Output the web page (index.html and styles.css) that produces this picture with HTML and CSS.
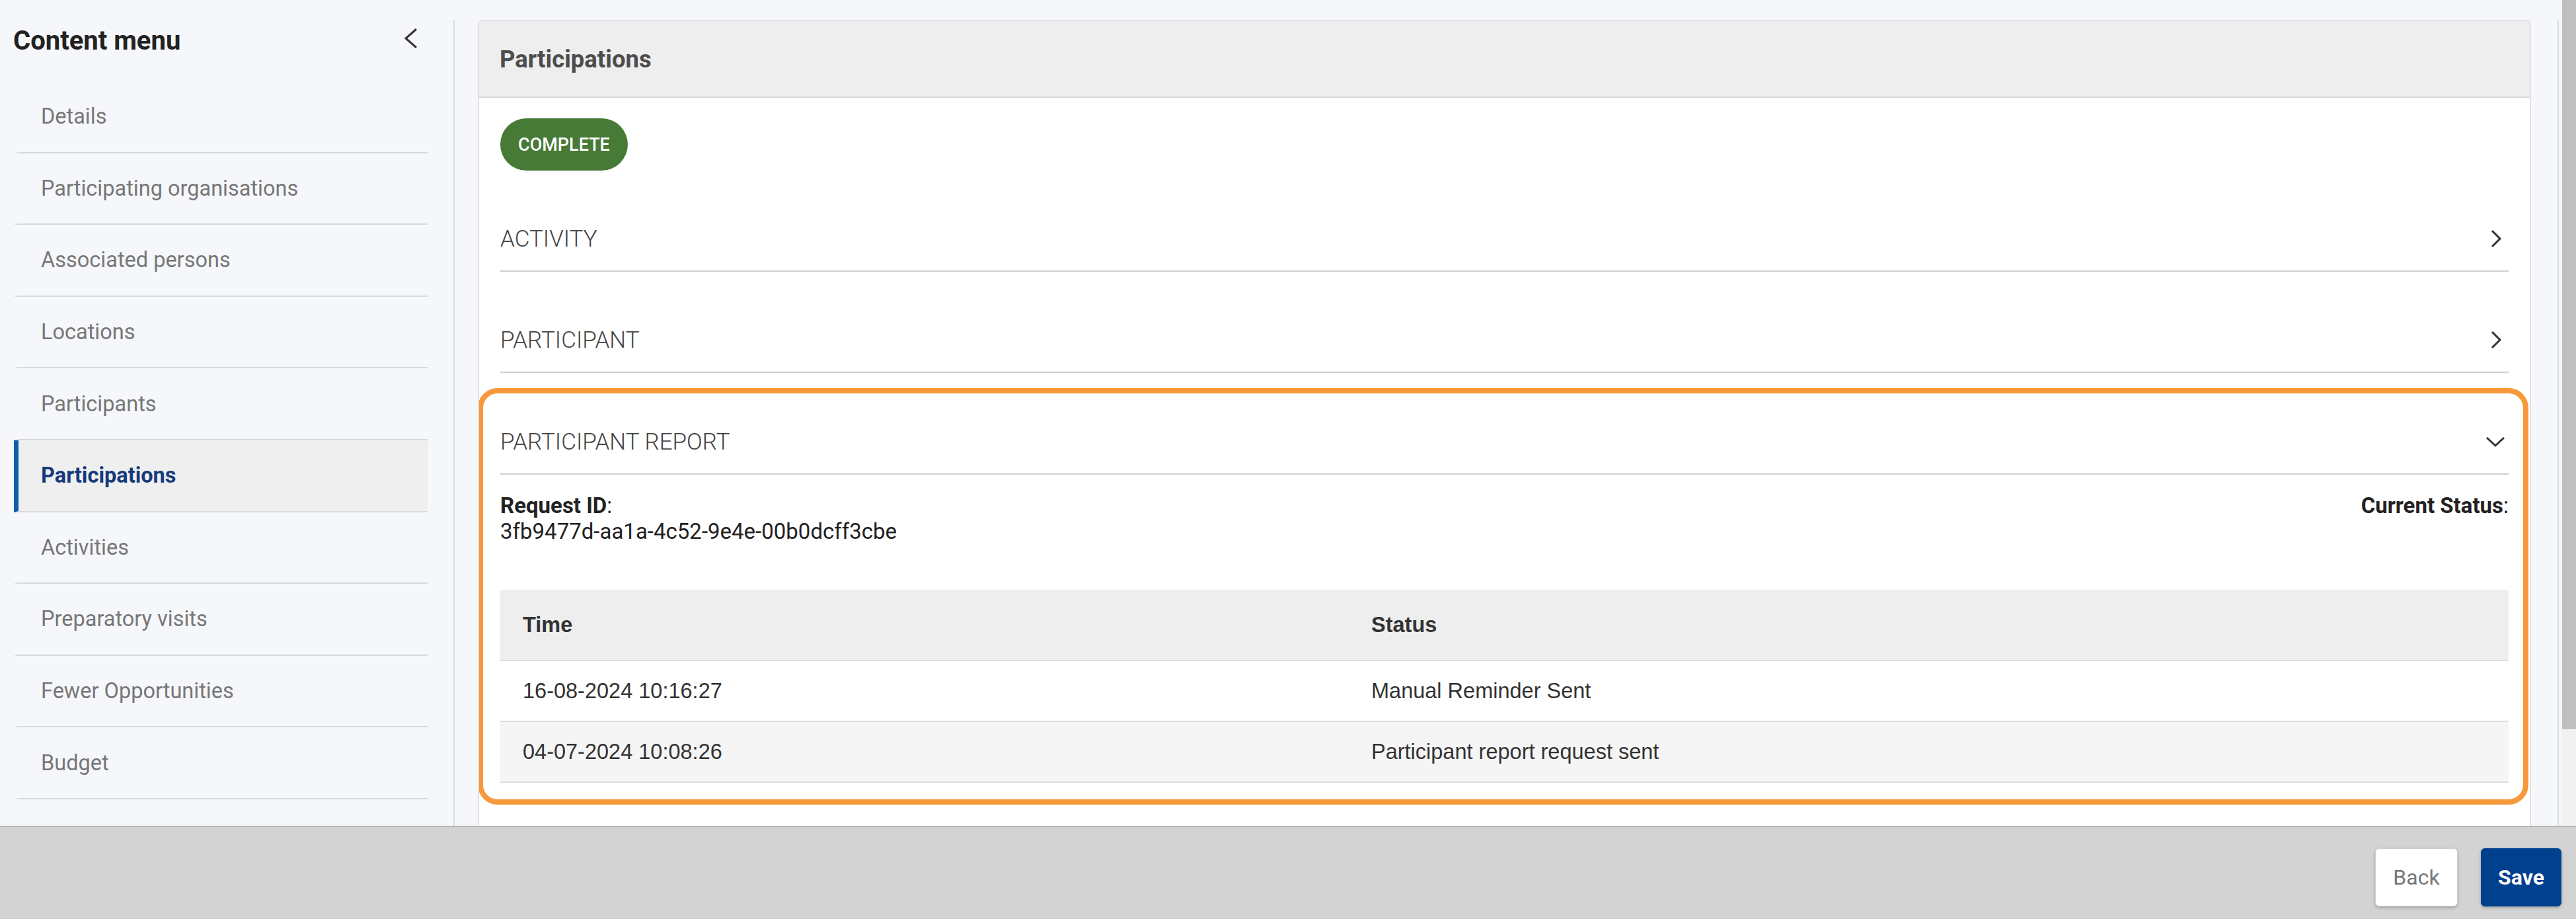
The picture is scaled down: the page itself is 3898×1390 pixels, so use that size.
FILE: index.html
```html
<!DOCTYPE html>
<html lang="en">
<head>
  <meta charset="UTF-8">
  <meta name="viewport" content="width=device-width, initial-scale=1.0">
  <title>Participations</title>
  <link rel="stylesheet" href="styles.css">
</head>
<body>
  <div class="app">
    <div class="workspace">
      <!-- left content menu -->
      <aside class="sidebar">
        <div class="sidebar-head">
          <h2>Content menu</h2>
          <button class="collapse" aria-label="Collapse menu">
            <svg width="24" height="32" viewBox="0 0 24 32"><polyline points="20,2 4,16 20,30" /></svg>
          </button>
        </div>
        <nav class="menu">
          <a href="#">Details</a>
          <a href="#">Participating organisations</a>
          <a href="#">Associated persons</a>
          <a href="#">Locations</a>
          <a href="#">Participants</a>
          <a href="#" class="active">Participations</a>
          <a href="#">Activities</a>
          <a href="#">Preparatory visits</a>
          <a href="#">Fewer Opportunities</a>
          <a href="#">Budget</a>
        </nav>
      </aside>

      <main class="main">
        <section class="card">
          <header class="card-head">Participations</header>
          <div class="card-body">
            <div><span class="badge">Complete</span></div>

            <div class="acc">
              <div class="acc-head">
                <span>ACTIVITY</span>
                <svg class="chev" width="20" height="30" viewBox="0 0 20 30"><polyline points="4,3 16,15 4,27" /></svg>
              </div>
            </div>

            <div class="acc">
              <div class="acc-head">
                <span>PARTICIPANT</span>
                <svg class="chev" width="20" height="30" viewBox="0 0 20 30"><polyline points="4,3 16,15 4,27" /></svg>
              </div>
            </div>

            <!-- opened section, highlighted -->
            <div class="acc open highlight">
              <div class="acc-head">
                <span>PARTICIPANT REPORT</span>
                <svg class="chev-down" width="30" height="16" viewBox="0 0 30 16"><polyline points="2,2 15,14 28,2" /></svg>
              </div>
              <div class="report-info">
                <div>
                  <b>Request ID</b>:<br>
                  3fb9477d-aa1a-4c52-9e4e-00b0dcff3cbe
                </div>
                <div><b>Current Status</b>:</div>
              </div>
              <table class="history">
                <thead>
                  <tr><th class="col-time">Time</th><th>Status</th></tr>
                </thead>
                <tbody>
                  <tr><td>16-08-2024 10:16:27</td><td>Manual Reminder Sent</td></tr>
                  <tr><td>04-07-2024 10:08:26</td><td>Participant report request sent</td></tr>
                </tbody>
              </table>
            </div>
          </div>
        </section>
        <div class="side-rule"></div>
      </main>

      <div class="scrollbar"><div class="thumb"></div></div>
    </div>

    <footer class="actions">
      <button class="btn">Back</button>
      <button class="btn primary">Save</button>
    </footer>
  </div>
</body>
</html>
```

FILE: styles.css
```css
* { box-sizing: border-box; margin: 0; padding: 0; }

body {
  font-family: Roboto, 'Liberation Sans', sans-serif;
  background: #f5f7fa;
  color: #333;
  height: 100vh;
  overflow: hidden;
}

.app {
  display: flex;
  flex-direction: column;
  height: 100vh;
}

.workspace {
  flex: 1;
  display: flex;
  min-height: 0;
  overflow: hidden;
}

/* sidebar */
.sidebar {
  width: 688px;
  flex-shrink: 0;
  background-color: #f5f7fa;
  background-image: linear-gradient(#dcdde0, #dcdde0);
  background-size: 2px calc(100% - 30px);
  background-position: right bottom;
  background-repeat: no-repeat;
}

.sidebar-head {
  display: flex;
  justify-content: space-between;
  align-items: center;
  height: 48px;
  margin: 38px 0 37px;
  padding: 0 54px 0 20px;
}

.sidebar-head h2 {
  font-size: 40px;
  font-weight: 700;
  color: #222;
  line-height: 48px;
}

.collapse {
  background: none;
  border: 0;
  display: flex;
  margin-bottom: 8px;
}

.collapse svg polyline,
.chev polyline,
.chev-down polyline {
  fill: none;
  stroke: #333;
  stroke-width: 3;
}

.menu {
  margin: 0 41px 0 21px;
}

.menu a {
  display: flex;
  align-items: center;
  height: 108.6px;
  padding-left: 34px;
  border-left: 7px solid transparent;
  border-bottom: 2px solid #d8d9db;
  font-size: 32.5px;
  color: #777;
  text-decoration: none;
}

.menu a.active {
  background: #efefef;
  border-left-color: #0d5ea6;
  color: #163a7c;
  font-weight: 700;
}

/* main area */
.main {
  flex: 1;
  display: flex;
  gap: 40px;
  padding: 30px 5px 0 35px;
  min-width: 0;
}

.side-rule {
  width: 2px;
  background: #dcdde0;
}

.card {
  flex: 1;
  background: #fff;
  border: 2px solid #e2e2e2;
  border-bottom: 0;
  border-radius: 8px 8px 0 0;
  overflow: hidden;
}

.card-head {
  height: 116px;
  display: flex;
  align-items: center;
  padding-left: 31px;
  background: #eeeeee;
  border-bottom: 2px solid #d8d8d8;
  font-size: 36.5px;
  font-weight: 700;
  color: #4d4d4d;
}

.card-body {
  padding: 31px 32px 0 32px;
}

.badge {
  display: inline-flex;
  align-items: center;
  height: 79px;
  padding: 0 27px;
  border-radius: 40px;
  background: #467a36;
  color: #fff;
  font-size: 27px;
  font-weight: 500;
  text-transform: uppercase;
}

/* accordion rows */
.acc {
  padding-top: 55px;
}

.acc-head {
  height: 98px;
  display: flex;
  justify-content: space-between;
  align-items: center;
  border-bottom: 2px solid #cfcfcf;
  font-size: 35px;
  font-weight: 300;
  color: #444;
}

.chev { margin-right: 9px; }
.chev-down { margin-right: 5px; }

.acc.highlight {
  margin: 23px -30px 0 -34px;
  padding: 25px 22px 25px 26px;
  border: 8px solid #f7993a;
  border-radius: 30px;
}

.report-info {
  display: flex;
  justify-content: space-between;
  margin-top: 27px;
  font-size: 33px;
  line-height: 39px;
  color: #222;
}

.report-info b { font-weight: 700; }

.history {
  width: 100%;
  margin-top: 69px;
  border-collapse: collapse;
  font-family: 'Liberation Sans', Arial, sans-serif;
  font-size: 32.5px;
  color: #333;
}

.history th,
.history td {
  text-align: left;
  padding: 0 34px;
  border-bottom: 2px solid #dcdcdc;
}

.history th {
  height: 107px;
  background: #eeeeee;
  font-weight: 700;
}

.history td { height: 92px; }

.history tbody tr:nth-child(even) td { background: #f5f5f5; }

.col-time { width: 1284px; }

/* fake scrollbar */
.scrollbar {
  width: 21px;
  flex-shrink: 0;
  background: #f1f1f1;
}

.thumb {
  height: 1103px;
  background: #bfbfbf;
}

/* footer actions */
.actions {
  height: 141px;
  flex-shrink: 0;
  display: flex;
  justify-content: flex-end;
  align-items: flex-start;
  gap: 35px;
  padding: 32px 22px 0 0;
  background: #d3d3d3;
  border-top: 2px solid #b4b4b4;
}

.btn {
  height: 88px;
  width: 125px;
  border: 1px solid #d0d0d0;
  border-radius: 6px;
  background: #fff;
  box-shadow: 0 2px 4px rgba(0, 0, 0, 0.25);
  font-family: Roboto, sans-serif;
  font-size: 32px;
  color: #777;
  cursor: pointer;
}

.btn.primary {
  width: 122px;
  background: #00408f;
  border-color: #00408f;
  color: #fff;
  font-weight: 700;
}
```
